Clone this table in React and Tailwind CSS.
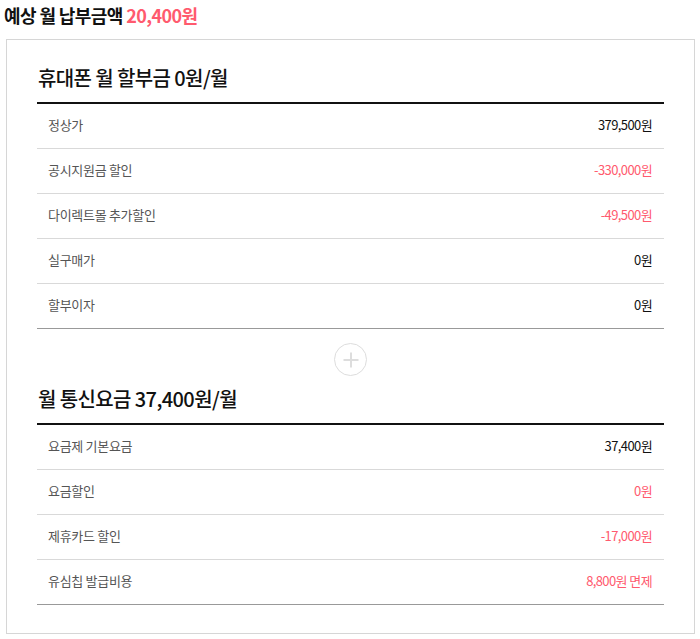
import React from "react";

const phoneRows = [
  { label: "정상가", value: "379,500원" },
  { label: "공시지원금 할인", value: "-330,000원", pink: true },
  { label: "다이렉트몰 추가할인", value: "-49,500원", pink: true },
  { label: "실구매가", value: "0원" },
  { label: "할부이자", value: "0원" },
];

const planRows = [
  { label: "요금제 기본요금", value: "37,400원" },
  { label: "요금할인", value: "0원", pink: true },
  { label: "제휴카드 할인", value: "-17,000원", pink: true },
  { label: "유심칩 발급비용", value: "8,800원 면제", pink: true },
];

const Row = ({ label, value, pink, last }) => (
  <div
    className={`flex h-[45px] items-center justify-between pl-[11px] pr-[12px] pb-[2px] ${
      last ? "border-b border-[#999]" : "border-b border-[#d9d9d9]"
    }`}
  >
    <span className="text-[13px] text-[#555] tracking-[-0.3px]">{label}</span>
    <span
      className={`text-[13px] tracking-[-0.6px] ${
        pink ? "text-[#ff5a6e]" : "text-[#111]"
      }`}
    >
      {value}
    </span>
  </div>
);

const Section = ({ title, rows, className }) => (
  <div className={className}>
    <h2 className="h-[30px] text-[20px] font-medium leading-[30px] tracking-[-0.6px] text-[#111] mb-[9px] pl-[1px]">
      {title}
    </h2>
    <div className="border-t-2 border-[#111]">
      {rows.map((r, i) => (
        <Row key={r.label} {...r} last={i === rows.length - 1} />
      ))}
    </div>
  </div>
);

export default function App() {
  return (
    <div
      className="min-h-screen w-[700px] bg-white"
      style={{ fontFamily: '"Noto Sans CJK KR", "Noto Sans", sans-serif' }}
    >
      <h1 className="h-[30px] pl-[4px] text-[18px] font-bold leading-[30px] tracking-[-0.6px] text-[#111] mb-[9px]">
        예상 월 납부금액 <span className="text-[#ff5a6e]">20,400원</span>
      </h1>
      <div className="ml-[6px] w-[689px] border border-[#d6d6d6] px-[30px] pt-[23px] pb-[28px]">
        <Section title="휴대폰 월 할부금 0원/월" rows={phoneRows} />
        <div className="flex justify-center pt-[14px] pb-[8px]">
          <div className="relative h-[33px] w-[33px] rounded-full border border-[#ddd]">
            <span className="absolute left-1/2 top-1/2 h-[2px] w-[15px] -translate-x-1/2 -translate-y-1/2 bg-[#ddd]" />
            <span className="absolute left-1/2 top-1/2 h-[15px] w-[2px] -translate-x-1/2 -translate-y-1/2 bg-[#ddd]" />
          </div>
        </div>
        <Section title="월 통신요금 37,400원/월" rows={planRows} />
      </div>
    </div>
  );
}
